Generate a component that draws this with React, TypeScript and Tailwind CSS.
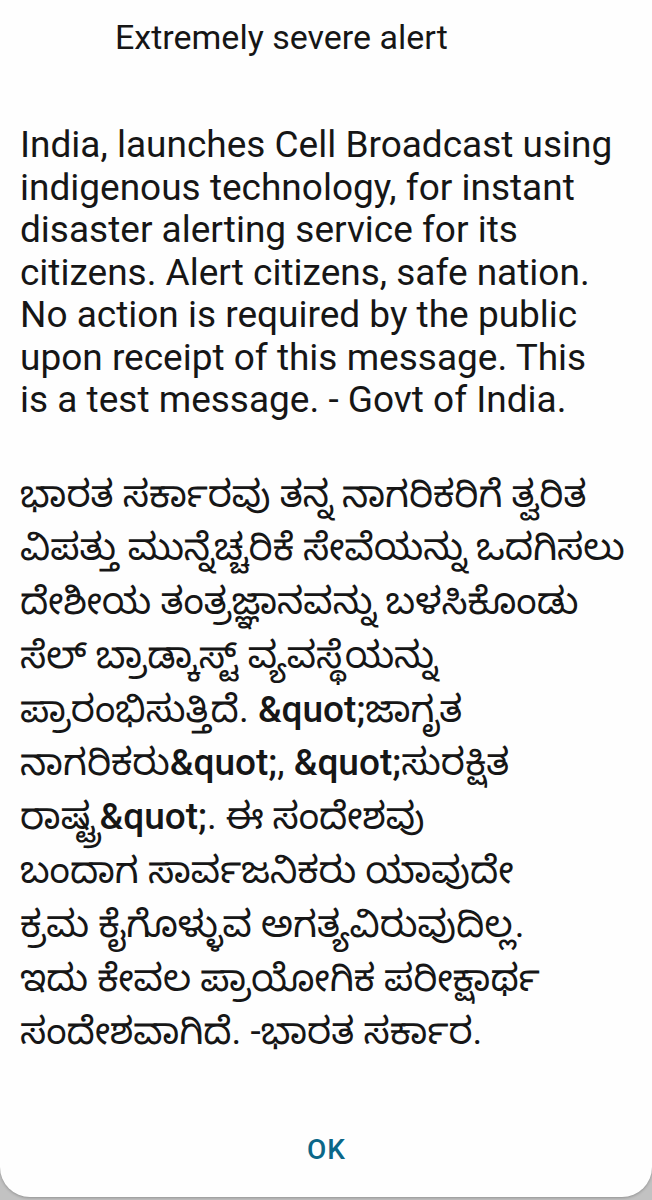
import React from "react";

const en = [
  "India, launches Cell Broadcast using",
  "indigenous technology, for instant",
  "disaster alerting service for its",
  "citizens. Alert citizens, safe nation.",
  "No action is required by the public",
  "upon receipt of this message. This",
  "is a test message. - Govt of India.",
];

const kn = [
  "ಭಾರತ ಸರ್ಕಾರವು ತನ್ನ ನಾಗರಿಕರಿಗೆ ತ್ವರಿತ",
  "ವಿಪತ್ತು ಮುನ್ನೆಚ್ಚರಿಕೆ ಸೇವೆಯನ್ನು ಒದಗಿಸಲು",
  "ದೇಶೀಯ ತಂತ್ರಜ್ಞಾನವನ್ನು ಬಳಸಿಕೊಂಡು",
  "ಸೆಲ್ ಬ್ರಾಡ್ಕಾಸ್ಟ್ ವ್ಯವಸ್ಥೆಯನ್ನು",
  "ಪ್ರಾರಂಭಿಸುತ್ತಿದೆ. &quot;ಜಾಗೃತ",
  "ನಾಗರಿಕರು&quot;, &quot;ಸುರಕ್ಷಿತ",
  "ರಾಷ್ಟ್ರ&quot;. ಈ ಸಂದೇಶವು",
  "ಬಂದಾಗ ಸಾರ್ವಜನಿಕರು ಯಾವುದೇ",
  "ಕ್ರಮ ಕೈಗೊಳ್ಳುವ ಅಗತ್ಯವಿರುವುದಿಲ್ಲ.",
  "ಇದು ಕೇವಲ ಪ್ರಾಯೋಗಿಕ ಪರೀಕ್ಷಾರ್ಥ",
  "ಸಂದೇಶವಾಗಿದೆ. -ಭಾರತ ಸರ್ಕಾರ.",
];

function KnLine({ text }: { text: string }) {
  const parts = text.split("&quot;");
  return (
    <div className="whitespace-nowrap">
      {parts.map((p, i) => (
        <React.Fragment key={i}>
          {i > 0 && <span className="font-medium">&amp;quot;</span>}
          {p}
        </React.Fragment>
      ))}
    </div>
  );
}

export default function App() {
  return (
    <div className="w-[652px] h-[1200px] bg-[#c2c2c2] overflow-hidden">
      <div
        className="w-[652px] h-[1197px] bg-[#fefefe] rounded-b-[30px] flex flex-col text-[#161616] shadow-[0_1px_3px_rgba(0,0,0,0.25)]"
        style={{ fontFamily: "Roboto, 'Noto Sans Kannada', 'Noto Sans', sans-serif" }}
      >
        <div className="pt-[16px] pl-[115px] text-[34px] leading-[42px] whitespace-nowrap">
          Extremely severe alert
        </div>
        <div className="mt-[66px] px-[20px] text-[37px] leading-[42.5px]">
          {en.map((l, i) => (
            <div key={i} className="whitespace-nowrap">{l}</div>
          ))}
        </div>
        <div className="mt-[46px] px-[20px] text-[37px] leading-[53.8px]">
          {kn.map((l, i) => (
            <KnLine key={i} text={l} />
          ))}
        </div>
        <div className="flex-1 flex items-end justify-center pb-[28px]">
          <div className="text-[28px] leading-[38px] font-medium tracking-[1px] pl-[1px] text-[#0b6788]">OK</div>
        </div>
      </div>
    </div>
  );
}
